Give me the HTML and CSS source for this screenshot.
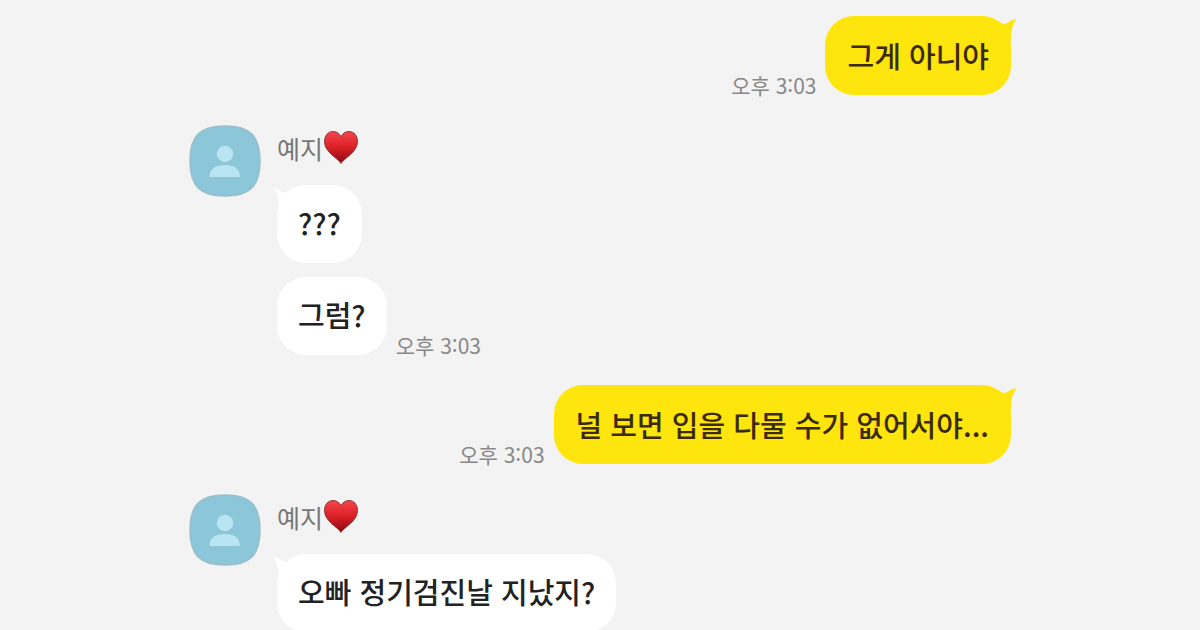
FILE: index.html
```html
<!DOCTYPE html>
<html lang="ko">
<head>
  <meta charset="UTF-8" />
  <meta name="viewport" content="width=device-width, initial-scale=1.0"/>
  <title>예지</title>
  <link rel="stylesheet" href="styles.css">
</head>
<body>

  <!-- shared shapes -->
  <svg class="defs" width="0" height="0" aria-hidden="true">
    <defs>
      <linearGradient id="heart-fill" x1="0" y1="0" x2="0" y2="1">
        <stop offset="0" stop-color="#f5474b"/>
        <stop offset="0.45" stop-color="#de2229"/>
        <stop offset="1" stop-color="#8f0710"/>
      </linearGradient>
      <symbol id="avatar" viewBox="0 0 72 72">
        <path d="M36 1C61 1 71 11 71 36C71 61 61 71 36 71C11 71 1 61 1 36C1 11 11 1 36 1Z" fill="#8bc6d9" stroke="#9abfca" stroke-width="1.5"/>
        <circle cx="36" cy="29" r="8.3" fill="#b9e4f2"/>
        <path d="M20.5 52C20.5 43.5 26.5 40 35.8 40C45 40 51 43.5 51 52Z" fill="#b9e4f2"/>
      </symbol>
      <symbol id="heart" viewBox="0 0 36 36">
        <path d="M18 33.500C15.500 28.500 1.500 22.500 1.500 11.500C1.500 5.500 5.200 1.500 10 1.500C13.800 1.500 16.800 3.800 18 7C19.200 3.800 22.200 1.500 26 1.500C30.800 1.500 34.500 5.500 34.500 11.500C34.500 22.500 20.500 28.500 18 33.500Z" fill="url(#heart-fill)" stroke="#8c3a3a" stroke-width="1"/>
      </symbol>
      <symbol id="tail" viewBox="0 0 18 24">
        <path d="M0 5Q4 10 8 7Q12 4 17.500 3Q12 10 12 24L0 24Z" fill="currentColor"/>
      </symbol>
    </defs>
  </svg>

  <main class="chat">
    <div class="row sent">
      <time class="time" datetime="15:03">오후 3:03</time>
      <div class="bubble yellow">그게 아니야<svg class="tail" aria-hidden="true"><use href="#tail"/></svg></div>
    </div>

    <div class="received">
      <svg class="avatar" aria-hidden="true"><use href="#avatar"/></svg>
      <div class="messages">
        <div class="name">예지<svg class="heart" role="img" aria-label="♥"><use href="#heart"/></svg></div>
        <div class="row">
          <div class="bubble white">???<svg class="tail" aria-hidden="true"><use href="#tail"/></svg></div>
        </div>
        <div class="row">
          <div class="bubble white">그럼?</div>
          <time class="time" datetime="15:03">오후 3:03</time>
        </div>
      </div>
    </div>

    <div class="row sent">
      <time class="time" datetime="15:03">오후 3:03</time>
      <div class="bubble yellow">널 보면 입을 다물 수가 없어서야...<svg class="tail" aria-hidden="true"><use href="#tail"/></svg></div>
    </div>

    <div class="received">
      <svg class="avatar" aria-hidden="true"><use href="#avatar"/></svg>
      <div class="messages">
        <div class="name">예지<svg class="heart" role="img" aria-label="♥"><use href="#heart"/></svg></div>
        <div class="row">
          <div class="bubble white">오빠 정기검진날 지났지?<svg class="tail" aria-hidden="true"><use href="#tail"/></svg></div>
        </div>
      </div>
    </div>
  </main>

</body>
</html>
```
FILE: styles.css
```css
* {
  box-sizing: border-box;
}
body {
  margin: 0;
  background-color: #f3f3f3;
  color: #222;
  font-family: "Noto Sans CJK KR", sans-serif;
}
.defs {
  position: absolute;
}
.chat {
  display: flex;
  flex-direction: column;
  gap: 30px;
  max-width: 854px;
  margin: 0 auto;
  padding: 16px 16px 0;
}

/* message rows */
.row {
  display: flex;
  align-items: flex-end;
  gap: 9px;
}
.sent {
  justify-content: flex-end;
}
.received {
  display: flex;
  align-items: flex-start;
  gap: 16px;
}
.messages {
  display: flex;
  flex-direction: column;
  gap: 14px;
}

.bubble {
  position: relative;
  padding: 19px 21px 23px;
  border-radius: 29px;
  font-size: 29px;
  font-weight: 500;
  line-height: 36px;
}
.yellow {
  padding: 21px 22px 22px;
  background: #fde50d;
  color: #3c2a0c;
}
.white {
  background: #fff;
}

/* little corner tail of the first bubble */
.tail {
  position: absolute;
  top: 0;
  right: -6px;
  width: 18px;
  height: 24px;
  color: #fde50d;
}
.white .tail {
  right: auto;
  left: -4px;
  color: #fff;
  transform: scaleX(-1);
}

.time {
  flex-shrink: 0;
  color: #888;
  font-size: 21px;
  line-height: 20px;
}

/* sender */
.avatar {
  flex-shrink: 0;
  width: 72px;
  height: 72px;
}
.name {
  display: flex;
  align-items: center;
  height: 46px;
  color: #777;
  font-size: 25px;
}
.heart {
  width: 36px;
  height: 36px;
}
```
